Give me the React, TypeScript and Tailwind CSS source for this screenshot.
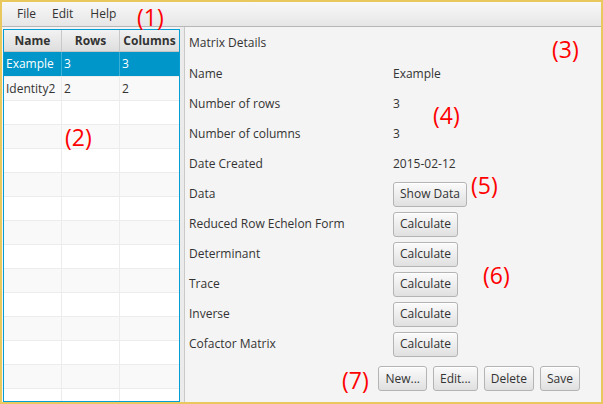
import clsx from 'clsx';

type Matrix = { name: string; rows: number; cols: number };

const matrices: Matrix[] = [
  { name: 'Example', rows: 3, cols: 3 },
  { name: 'Identity2', rows: 2, cols: 2 },
];

const details: { label: string; value?: string; button?: string }[] = [
  { label: 'Name', value: 'Example' },
  { label: 'Number of rows', value: '3' },
  { label: 'Number of columns', value: '3' },
  { label: 'Date Created', value: '2015-02-12' },
  { label: 'Data', button: 'Show Data' },
  { label: 'Reduced Row Echelon Form', button: 'Calculate' },
  { label: 'Determinant', button: 'Calculate' },
  { label: 'Trace', button: 'Calculate' },
  { label: 'Inverse', button: 'Calculate' },
  { label: 'Cofactor Matrix', button: 'Calculate' },
];

const font = { fontFamily: '"Open Sans", "Noto Sans", sans-serif' };

function FxButton({ children }: { children: string }) {
  return (
    <button className="h-[25px] rounded-[3px] border border-[#b4b4b4] bg-gradient-to-b from-[#fbfbfb] to-[#e0e0e0] px-[6px] text-[12px] leading-none text-[#333] shadow-[inset_0_1px_0_#fff]">
      {children}
    </button>
  );
}

function Note({ children, className }: { children: string; className: string }) {
  return <span className={clsx('absolute text-[23px] leading-none text-[#ff0000]', className)}>{children}</span>;
}

export default function App() {
  const emptyRows = Array.from({ length: 13 });

  return (
    <div className="relative flex h-[404px] w-[603px] flex-col border-2 border-[#e9c85e] bg-[#f4f4f4] text-[12px] text-[#333]" style={font}>
      <div className="flex h-[25px] shrink-0 items-center border-b border-[#b6b6b6] bg-gradient-to-b from-[#f8f8f8] to-[#e6e6e6] pl-[15px]">
        <span className="mr-[16px]">File</span>
        <span className="mr-[17px]">Edit</span>
        <span>Help</span>
      </div>

      <div className="flex min-h-0 flex-1">
        <div className="flex w-[178px] flex-col bg-[#f4f4f4] pl-px pt-[2px]">
          <div className="flex flex-1 flex-col overflow-hidden border border-[#039ed3] bg-white">
            <div className="flex h-[22px] shrink-0 border-b border-[#c5c5c5] bg-gradient-to-b from-[#f2f2f2] to-[#dedede] font-bold text-[#333]">
              <div className="flex w-[58px] items-center justify-center border-r border-[#c8c8c8]">Name</div>
              <div className="flex w-[58px] items-center justify-center border-r border-[#c8c8c8]">Rows</div>
              <div className="flex flex-1 items-center justify-center">Columns</div>
            </div>
            {matrices.map((m, i) => (
              <div
                key={m.name}
                className={clsx(
                  'flex h-[24px] shrink-0',
                  i === 0 ? 'bg-[#0096c9] text-white' : 'border-t border-[#ececec] bg-[#f9f9f9] text-[#333]'
                )}
              >
                <div className={clsx('flex w-[58px] items-center border-r pl-[2px]', i === 0 ? 'border-[#3ab0d8]' : 'border-[#ececec]')}>{m.name}</div>
                <div className={clsx('flex w-[58px] items-center border-r pl-[2px]', i === 0 ? 'border-[#3ab0d8]' : 'border-[#ececec]')}>{m.rows}</div>
                <div className="flex flex-1 items-center pl-[2px]">{m.cols}</div>
              </div>
            ))}
            {emptyRows.map((_, i) => (
              <div key={i} className={clsx('flex h-[24px] shrink-0 border-t border-[#ececec]', i % 2 === 1 ? 'bg-[#f9f9f9]' : 'bg-white')}>
                <div className="w-[58px] border-r border-[#ececec]" />
                <div className="w-[58px] border-r border-[#ececec]" />
                <div className="flex-1" />
              </div>
            ))}
          </div>
        </div>

        <div className="w-[4px] bg-[#ebebeb]" />
        <div className="w-px bg-[#c9c9c9]" />

        <div className="flex flex-1 flex-col pl-[4px] pt-[6px]">
          <div className="h-[20px] leading-[20px] text-[#333]">Matrix Details</div>
          <div className="mt-[6px] flex flex-col">
            {details.map(d => (
              <div key={d.label} className="flex h-[30px] items-center">
                <span className="w-[204px]">{d.label}</span>
                {d.value && <span>{d.value}</span>}
                {d.button && <FxButton>{d.button}</FxButton>}
              </div>
            ))}
          </div>
          <div className="mt-[7px] flex justify-end gap-[6px] pr-[21px]">
            <FxButton>New...</FxButton>
            <FxButton>Edit...</FxButton>
            <FxButton>Delete</FxButton>
            <FxButton>Save</FxButton>
          </div>
        </div>
      </div>

      <Note className="left-[135px] top-[4px]">(1)</Note>
      <Note className="left-[63px] top-[124px]">(2)</Note>
      <Note className="left-[550px] top-[36px]">(3)</Note>
      <Note className="left-[431px] top-[102px]">(4)</Note>
      <Note className="left-[469px] top-[172px]">(5)</Note>
      <Note className="left-[481px] top-[262px]">(6)</Note>
      <Note className="left-[340px] top-[367px]">(7)</Note>
    </div>
  );
}
